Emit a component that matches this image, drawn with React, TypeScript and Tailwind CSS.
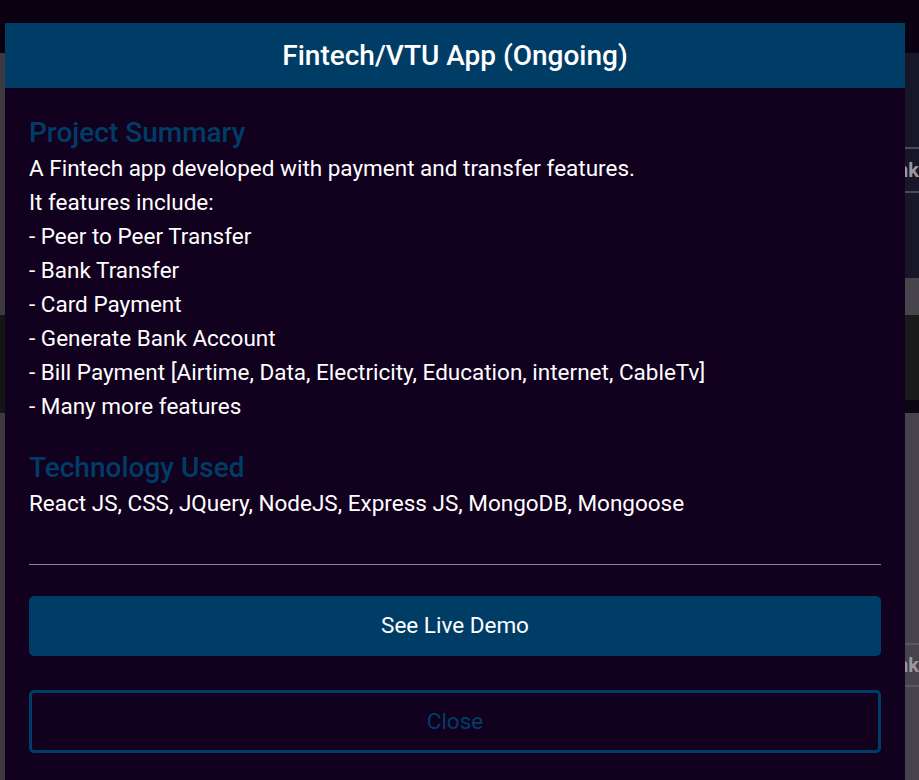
import React from 'react';

const features = [
  'Peer to Peer Transfer',
  'Bank Transfer',
  'Card Payment',
  'Generate Bank Account',
  'Bill Payment [Airtime, Data, Electricity, Education, internet, CableTv]',
  'Many more features'
];

const technologies = ['React JS', 'CSS', 'JQuery', 'NodeJS', 'Express JS', 'MongoDB', 'Mongoose'];

function Backdrop() {
  return (
    <div className="flex min-h-screen flex-col bg-[#0a0012]">
      <div className="h-[53px]" />
      <div className="grid flex-1 grid-cols-2">
        {/* left column of the page behind */}
        <div className="flex flex-col">
          <div className="h-[262px] bg-[#3c3a40]" />
          <div className="h-[98px] bg-[#141414]" />
          <div className="flex-1 bg-[#3c3a40]" />
        </div>
        {/* right column of the page behind */}
        <div className="flex flex-col">
          <div className="flex h-[225px] flex-col justify-start bg-[#171729] pt-[94px]">
            <div className="h-[2px] bg-[#4a4a58]" />
            <div className="flex h-[42px] items-center justify-end text-[20px] font-bold text-[#9a98a0]">
              Bank
            </div>
            <div className="h-[2px] bg-[#4a4a58]" />
          </div>
          <div className="h-[37px] bg-[#48444c]" />
          <div className="h-[85px] bg-[#1a1a1a]" />
          <div className="h-[13px] bg-[#0a0612]" />
          <div className="flex flex-1 flex-col bg-[#47434b] pt-[230px]">
            <div className="h-[2px] bg-[#5a565e]" />
            <div className="flex h-[40px] items-center justify-end text-[20px] font-bold text-[#9a98a0]">
              Bank
            </div>
            <div className="h-[2px] bg-[#5a565e]" />
          </div>
        </div>
      </div>
    </div>
  );
}

export default function App() {
  return (
    <div className="relative h-[780px] overflow-hidden font-['Roboto',sans-serif]">
      <Backdrop />

      {/* project modal */}
      <div className="absolute left-[5px] top-[23px] w-[900px] bg-[#12001f]">
        <div className="flex h-[65px] items-center justify-center bg-[#003d66]">
          <h2 className="text-[28px] font-medium text-white">Fintech/VTU App (Ongoing)</h2>
        </div>

        <div className="pb-10 pl-[24px] pr-[24px] pt-[29px]">
          <h3 className="text-[28px] font-medium leading-[31px] text-[#003d66]">Project Summary</h3>
          <div className="mt-[3px] text-[22.5px] leading-[34px] text-white">
            <p>A Fintech app developed with payment and transfer features.</p>
            <p>It features include:</p>
            {features.map((item) => (
              <p key={item}>- {item}</p>
            ))}
          </div>

          <h3 className="mt-[29px] text-[28px] font-medium leading-[31px] text-[#003d66]">
            Technology Used
          </h3>
          <p className="mt-[3px] text-[22.5px] leading-[34px] text-white">{technologies.join(', ')}</p>

          <hr className="mt-[44px] border-t border-[#8a8590]" />

          <button className="mt-[31px] flex h-[60px] w-full items-center justify-center rounded-[5px] bg-[#003d66] text-[22.5px] text-white">
            See Live Demo
          </button>
          <button className="mt-[34px] flex h-[63px] w-full items-center justify-center rounded-[5px] border-[3px] border-[#003d66] text-[22.5px] text-[#003d66]">
            Close
          </button>
        </div>
      </div>
    </div>
  );
}
